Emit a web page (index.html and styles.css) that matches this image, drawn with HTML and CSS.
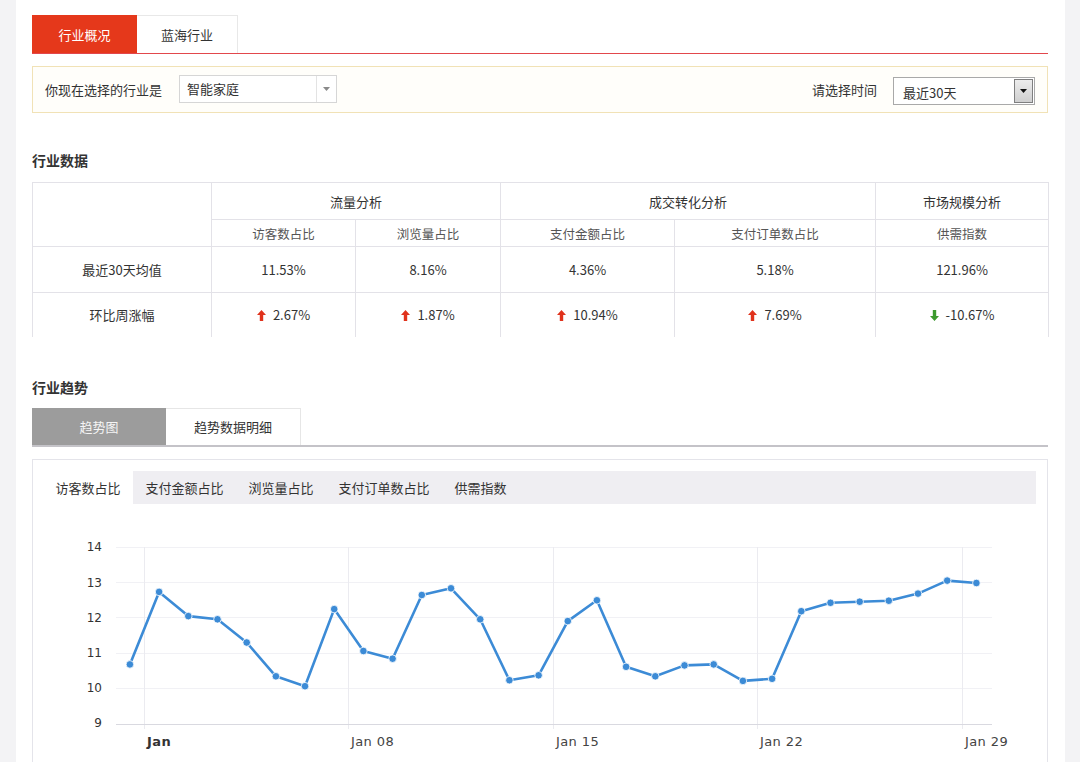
FILE: index.html
```html
<!DOCTYPE html>
<html lang="zh-CN">
<head>
<meta charset="utf-8">
<title>行业概况</title>
<link rel="stylesheet" href="styles.css">
</head>
<body>
<div class="page">
  <div class="top-tabs">
    <div class="top-tab active">行业概况</div>
    <div class="top-tab">蓝海行业</div>
  </div>

  <div class="filter">
    <span class="filter-label">你现在选择的行业是</span>
    <div class="select select-industry">
      <span class="select-text">智能家庭</span>
      <span class="select-arrow"><svg width="7" height="4" viewBox="0 0 7 4"><path d="M0 0h7L3.5 4z" fill="#8a8a8a"/></svg></span>
    </div>
    <span class="spacer"></span>
    <span class="filter-label">请选择时间</span>
    <div class="select select-time">
      <span class="select-text">最近30天</span>
      <span class="select-btn"><svg width="7" height="4" viewBox="0 0 7 4"><path d="M0 0h7L3.5 4z" fill="#111"/></svg></span>
    </div>
  </div>

  <h2 class="section-title title-data">行业数据</h2>

  <table class="data">
    <colgroup>
      <col class="c1"><col class="c2"><col class="c3"><col class="c4"><col class="c5"><col class="c6">
    </colgroup>
    <tr class="r-group">
      <td rowspan="2"></td>
      <td colspan="2">流量分析</td>
      <td colspan="2">成交转化分析</td>
      <td>市场规模分析</td>
    </tr>
    <tr class="r-sub">
      <td>访客数占比</td>
      <td>浏览量占比</td>
      <td>支付金额占比</td>
      <td>支付订单数占比</td>
      <td>供需指数</td>
    </tr>
    <tr class="r-val">
      <td>最近30天均值</td>
      <td>11.53%</td>
      <td>8.16%</td>
      <td>4.36%</td>
      <td>5.18%</td>
      <td>121.96%</td>
    </tr>
    <tr class="r-chg">
      <td>环比周涨幅</td>
      <td><svg class="arrow" width="9" height="11" viewBox="0 0 9 11"><path d="M4.5 0L9 5H6.2v6H2.8V5H0z" fill="#e0321c"/></svg>2.67%</td>
      <td><svg class="arrow" width="9" height="11" viewBox="0 0 9 11"><path d="M4.5 0L9 5H6.2v6H2.8V5H0z" fill="#e0321c"/></svg>1.87%</td>
      <td><svg class="arrow" width="9" height="11" viewBox="0 0 9 11"><path d="M4.5 0L9 5H6.2v6H2.8V5H0z" fill="#e0321c"/></svg>10.94%</td>
      <td><svg class="arrow" width="9" height="11" viewBox="0 0 9 11"><path d="M4.5 0L9 5H6.2v6H2.8V5H0z" fill="#e0321c"/></svg>7.69%</td>
      <td><svg class="arrow" width="9" height="11" viewBox="0 0 9 11"><path d="M4.5 11L9 6H6.2V0H2.8v6H0z" fill="#3d9a2e"/></svg>-10.67%</td>
    </tr>
  </table>

  <h2 class="section-title title-trend">行业趋势</h2>

  <div class="trend-tabs">
    <div class="trend-tab active">趋势图</div>
    <div class="trend-tab">趋势数据明细</div>
  </div>

  <div class="chart-panel">
    <div class="metric-bar">
      <span class="metric active">访客数占比</span>
      <span class="metric">支付金额占比</span>
      <span class="metric">浏览量占比</span>
      <span class="metric">支付订单数占比</span>
      <span class="metric">供需指数</span>
    </div>
    <svg class="chart" width="1014" height="258" viewBox="33 504 1014 258">
      <g class="grid-h" stroke="#f1f1f5" stroke-width="1">
        <line x1="116" y1="546.5" x2="992" y2="546.5"/>
        <line x1="116" y1="581.5" x2="992" y2="581.5"/>
        <line x1="116" y1="616.5" x2="992" y2="616.5"/>
        <line x1="116" y1="652.5" x2="992" y2="652.5"/>
        <line x1="116" y1="687.5" x2="992" y2="687.5"/>
      </g>
      <g class="grid-v" stroke="#ebebf0" stroke-width="1">
        <line x1="144.5" y1="546" x2="144.5" y2="728"/>
        <line x1="348.5" y1="546" x2="348.5" y2="728"/>
        <line x1="553.5" y1="546" x2="553.5" y2="728"/>
        <line x1="757.5" y1="546" x2="757.5" y2="728"/>
        <line x1="962.5" y1="546" x2="962.5" y2="728"/>
      </g>
      <line x1="116" y1="723.5" x2="992" y2="723.5" stroke="#d9d9e0" stroke-width="1"/>
      <g class="y-labels" text-anchor="end">
        <text x="102" y="550">14</text>
        <text x="102" y="586">13</text>
        <text x="102" y="621">12</text>
        <text x="102" y="656">11</text>
        <text x="102" y="691">10</text>
        <text x="102" y="726">9</text>
      </g>
      <g class="x-labels">
        <text class="x-bold" x="147" y="745">Jan</text>
        <text x="351" y="745">Jan 08</text>
        <text x="556" y="745">Jan 15</text>
        <text x="760" y="745">Jan 22</text>
        <text x="965" y="745">Jan 29</text>
      </g>
      <polyline fill="none" stroke="#3c8bd6" stroke-width="2.6" stroke-linejoin="round"
        points="129.9,663.4 159.1,590.9 188.3,615.1 217.5,618.3 246.7,641.5 275.9,675.3 305.0,685.2 334.2,608.1 363.4,650.0 392.6,657.7 421.8,594.0 451.0,587.3 480.2,618.3 509.4,679.2 538.6,674.3 567.8,620.1 596.9,599.3 626.1,665.8 655.3,675.3 684.5,664.4 713.7,663.4 742.9,679.9 772.1,677.8 801.3,610.2 830.5,601.8 859.7,600.7 888.8,599.7 918.0,592.6 947.2,579.6 976.4,582.0"/>
      <g fill="#3c8bd6" stroke="#ffffff" stroke-width="0.8">
        <circle cx="129.9" cy="663.4" r="3.8"/>
        <circle cx="159.1" cy="590.9" r="3.8"/>
        <circle cx="188.3" cy="615.1" r="3.8"/>
        <circle cx="217.5" cy="618.3" r="3.8"/>
        <circle cx="246.7" cy="641.5" r="3.8"/>
        <circle cx="275.9" cy="675.3" r="3.8"/>
        <circle cx="305.0" cy="685.2" r="3.8"/>
        <circle cx="334.2" cy="608.1" r="3.8"/>
        <circle cx="363.4" cy="650.0" r="3.8"/>
        <circle cx="392.6" cy="657.7" r="3.8"/>
        <circle cx="421.8" cy="594.0" r="3.8"/>
        <circle cx="451.0" cy="587.3" r="3.8"/>
        <circle cx="480.2" cy="618.3" r="3.8"/>
        <circle cx="509.4" cy="679.2" r="3.8"/>
        <circle cx="538.6" cy="674.3" r="3.8"/>
        <circle cx="567.8" cy="620.1" r="3.8"/>
        <circle cx="596.9" cy="599.3" r="3.8"/>
        <circle cx="626.1" cy="665.8" r="3.8"/>
        <circle cx="655.3" cy="675.3" r="3.8"/>
        <circle cx="684.5" cy="664.4" r="3.8"/>
        <circle cx="713.7" cy="663.4" r="3.8"/>
        <circle cx="742.9" cy="679.9" r="3.8"/>
        <circle cx="772.1" cy="677.8" r="3.8"/>
        <circle cx="801.3" cy="610.2" r="3.8"/>
        <circle cx="830.5" cy="601.8" r="3.8"/>
        <circle cx="859.7" cy="600.7" r="3.8"/>
        <circle cx="888.8" cy="599.7" r="3.8"/>
        <circle cx="918.0" cy="592.6" r="3.8"/>
        <circle cx="947.2" cy="579.6" r="3.8"/>
        <circle cx="976.4" cy="582.0" r="3.8"/>
      </g>
    </svg>
  </div>
</div>
</body>
</html>
```

FILE: styles.css
```css
* {
  box-sizing: border-box;
}

html, body {
  margin: 0;
  padding: 0;
}

body {
  background: #f3f3f5;
  font-family: "Microsoft YaHei", "Noto Sans CJK SC", "Noto Sans", sans-serif;
  font-size: 13px;
  color: #333;
  overflow: hidden;
}

.page {
  margin-left: 16px;
  width: 1049px;
  min-height: 762px;
  background: #ffffff;
  padding: 15px 17px 0 16px;
}

/* top tabs */
.top-tabs {
  display: flex;
  height: 39px;
  border-bottom: 1px solid #e2474c;
}

.top-tab {
  display: flex;
  align-items: center;
  justify-content: center;
  height: 38px;
  font-size: 13px;
  color: #333;
}

.top-tab.active {
  width: 105px;
  background: #e5381b;
  color: #ffffff;
}

.top-tab:not(.active) {
  width: 101px;
  border-top: 1px solid #e8e8e8;
  border-right: 1px solid #e8e8e8;
}

/* filter */
.filter {
  display: flex;
  align-items: center;
  margin-top: 12px;
  height: 47px;
  border: 1px solid #f1e2b6;
  background: #fffefa;
  padding: 0 12px;
}

.filter-label {
  font-size: 13px;
  color: #333;
  white-space: nowrap;
}

.spacer {
  flex: 1;
}

.select {
  display: flex;
  align-items: center;
  height: 28px;
  background: #ffffff;
}

.select-industry {
  width: 158px;
  margin-left: 17px;
  margin-top: -2px;
  border: 1px solid #d6d6d6;
}

.select-industry .select-text {
  flex: 1;
  padding-left: 7px;
}

.select-arrow {
  width: 20px;
  height: 100%;
  border-left: 1px solid #e3e3e3;
  display: flex;
  align-items: center;
  justify-content: center;
}

.select-time {
  width: 142px;
  margin-left: 16px;
  margin-top: 3px;
  border: 1px solid #a9a9a9;
  padding-right: 1px;
}

.select-time .select-text {
  flex: 1;
  padding-left: 9px;
  padding-top: 2px;
}

.select-btn {
  width: 19px;
  height: 24px;
  border: 1px solid #7f7f7f;
  background: linear-gradient(#ececec, #cfcfcf);
  display: flex;
  align-items: center;
  justify-content: center;
}

/* section titles */
.section-title {
  margin: 0;
  font-size: 14px;
  font-weight: bold;
  line-height: 20px;
  color: #333;
}

.title-data {
  margin-top: 37px;
}

.title-trend {
  margin-top: 40px;
}

/* table */
.data {
  margin-top: 12px;
  width: 1016px;
  border-collapse: collapse;
  table-layout: fixed;
  text-align: center;
}

.c1 { width: 179px; }
.c2 { width: 144px; }
.c3 { width: 145px; }
.c4 { width: 174px; }
.c5 { width: 201px; }
.c6 { width: 173px; }

.data td {
  border: 1px solid #e3e2e8;
  padding: 0;
  font-size: 13px;
  color: #333;
}

.r-group td {
  height: 37px;
}

.r-sub td {
  height: 27px;
  font-size: 12.5px;
  color: #555;
}

.r-val td {
  height: 46px;
}

.r-chg td {
  height: 44px;
  border-bottom: none;
}

.arrow {
  vertical-align: -1px;
  margin-right: 7px;
}

/* trend tabs */
.trend-tabs {
  display: flex;
  margin-top: 11px;
  border-bottom: 2px solid #c4c3c8;
}

.trend-tab {
  display: flex;
  align-items: center;
  justify-content: center;
  height: 37px;
  width: 135px;
  font-size: 13px;
  color: #333;
}

.trend-tab.active {
  width: 134px;
  background: #9c9c9c;
  color: #f4f4f4;
}

.trend-tab:not(.active) {
  border-top: 1px solid #e6e6e6;
  border-right: 1px solid #e6e6e6;
}

/* chart panel */
.chart-panel {
  margin-top: 12px;
  border: 1px solid #e4e4ea;
  border-bottom: none;
  height: 320px;
}

.metric-bar {
  display: flex;
  align-items: center;
  margin: 11px 11px 0 10px;
  height: 33px;
  background: #efeef2;
}

.metric {
  display: flex;
  align-items: center;
  height: 100%;
  padding: 0 12.5px;
  font-size: 13px;
  color: #333;
  white-space: nowrap;
}

.metric.active {
  background: #ffffff;
}

.chart {
  display: block;
  margin-top: 1px;
}

.y-labels text {
  font-family: "DejaVu Sans", Verdana, sans-serif;
  font-size: 12px;
  fill: #333;
}

.x-labels text {
  font-family: "DejaVu Sans", Verdana, sans-serif;
  font-size: 13px;
  letter-spacing: 0.4px;
  fill: #444;
}

.x-labels .x-bold {
  font-weight: bold;
  fill: #333;
}
```
